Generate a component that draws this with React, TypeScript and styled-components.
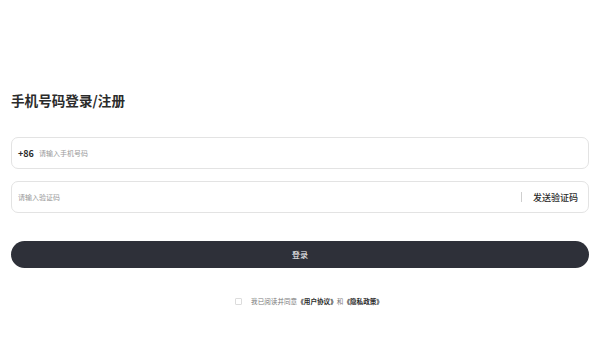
import React from 'react';
import styled, { createGlobalStyle } from 'styled-components';

const GlobalStyle = createGlobalStyle`
  html, body {
    margin: 0;
    padding: 0;
    background: #fff;
  }
  body {
    font-family: "Noto Sans CJK SC", "Noto Sans", sans-serif;
  }
`;

const Page = styled.div`
  width: 600px;
  height: 338px;
  box-sizing: border-box;
  padding: 90px 11px 0 11px;
  display: flex;
  flex-direction: column;
`;

const Title = styled.h1`
  margin: 0;
  font-size: 13.6px;
  line-height: 20px;
  font-weight: 700;
  color: #2b2b2b;
`;

const Form = styled.div`
  margin-top: 27px;
  display: flex;
  flex-direction: column;
  gap: 12px;
`;

const Field = styled.div`
  height: 32px;
  box-sizing: border-box;
  border: 1px solid #e3e3e3;
  border-radius: 7px;
  display: flex;
  align-items: center;
  padding: 0 10px 0 6px;
`;

const Prefix = styled.span`
  font-size: 9px;
  font-weight: 700;
  color: #2b2b2b;
  margin-right: 5px;
`;

const Input = styled.input`
  flex: 1;
  border: none;
  outline: none;
  padding: 0;
  background: transparent;
  font-family: inherit;
  font-size: 7px;
  color: #333;

  &::placeholder {
    color: #9a9a9a;
  }
`;

const Divider = styled.span`
  width: 1px;
  height: 10px;
  background: #cfcfcf;
  margin-right: 11px;
`;

const SendCode = styled.button`
  border: none;
  background: none;
  padding: 0;
  font-family: inherit;
  font-size: 9px;
  font-weight: 500;
  color: #2b2b2b;
  cursor: pointer;
`;

const LoginButton = styled.button`
  margin-top: 28px;
  height: 27px;
  border: none;
  border-radius: 14px;
  background: #2e3039;
  color: #fff;
  font-family: inherit;
  font-size: 8px;
  cursor: pointer;
`;

const Agreement = styled.label`
  margin-top: 27px;
  display: flex;
  align-items: center;
  justify-content: center;
  font-size: 6.6px;
  line-height: 12px;
  color: #7a7a7a;
  padding-left: 18px;
`;

const Check = styled.span`
  width: 5px;
  height: 5px;
  border: 1px solid #dcdcdc;
  border-radius: 1px;
  margin-right: 9px;
`;

const Strong = styled.b`
  color: #2b2b2b;
  font-weight: 700;
`;

export default function App() {
  return (
    <Page>
      <GlobalStyle />
      <Title>手机号码登录/注册</Title>
      <Form>
        <Field>
          <Prefix>+86</Prefix>
          <Input placeholder="请输入手机号码" />
        </Field>
        <Field>
          <Input placeholder="请输入验证码" />
          <Divider />
          <SendCode>发送验证码</SendCode>
        </Field>
      </Form>
      <LoginButton>登录</LoginButton>
      <Agreement>
        <Check />
        我已阅读并同意<Strong>《用户协议》</Strong>和<Strong>《隐私政策》</Strong>
      </Agreement>
    </Page>
  );
}
